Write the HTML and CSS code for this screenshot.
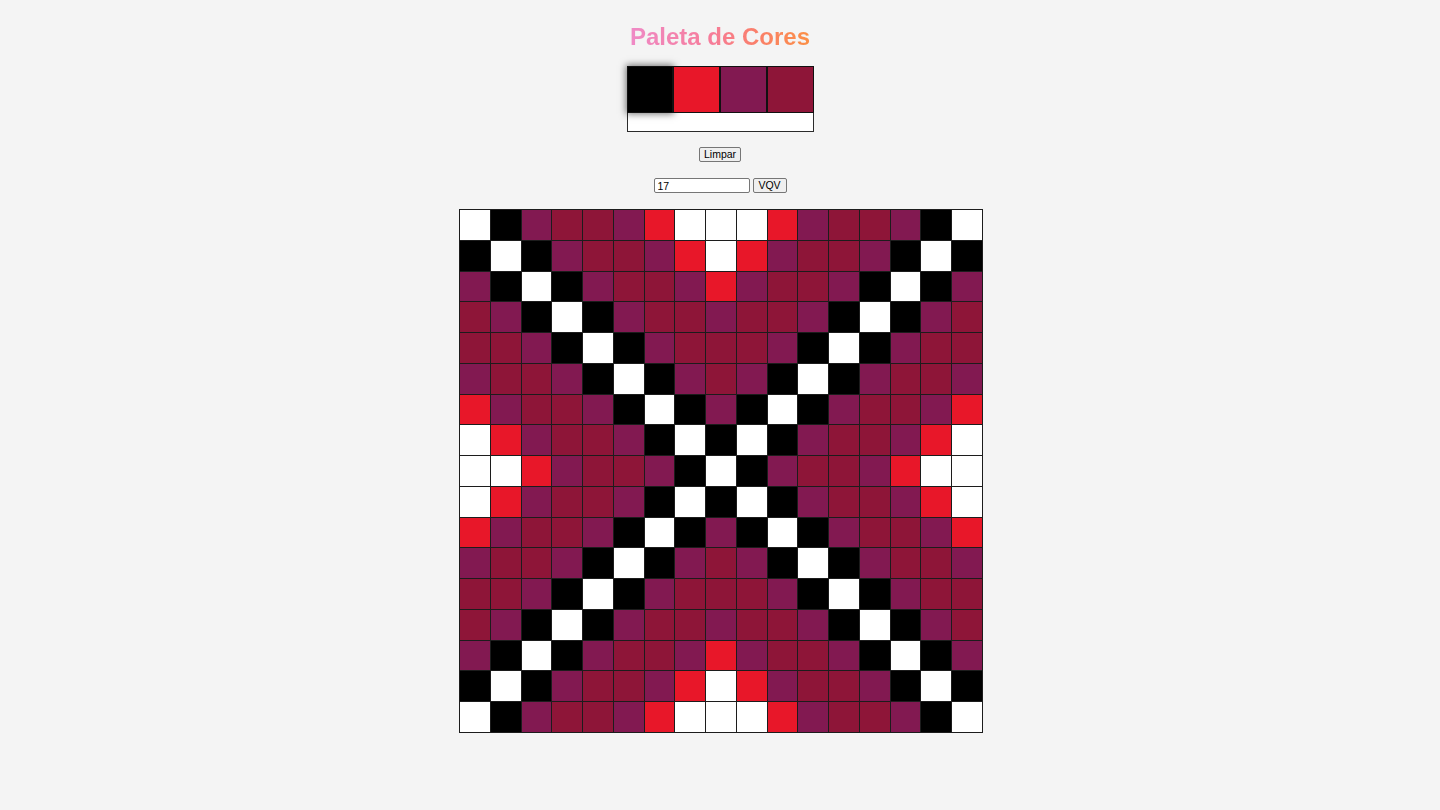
FILE: index.html
```html
<!DOCTYPE html>
<html lang="pt-BR">
<head>
<meta charset="utf-8">
<title>Paleta de Cores</title>
<link rel="stylesheet" href="styles.css">
</head>
<body>
<main class="app">
  <h1 class="title">Paleta de Cores</h1>
  <section class="palette">
    <div class="swatches">
      <div class="swatch k selected"></div>
      <div class="swatch r"></div>
      <div class="swatch p"></div>
      <div class="swatch m"></div>
    </div>
  </section>
  <button class="btn clear">Limpar</button>
  <div class="size-row">
    <input class="size-input" type="text" value="17">
    <button class="btn vqv">VQV</button>
  </div>
  <section class="board">
    <div class="c w"></div><div class="c k"></div><div class="c p"></div><div class="c m"></div><div class="c m"></div><div class="c p"></div><div class="c r"></div><div class="c w"></div><div class="c w"></div><div class="c w"></div><div class="c r"></div><div class="c p"></div><div class="c m"></div><div class="c m"></div><div class="c p"></div><div class="c k"></div><div class="c w"></div>
    <div class="c k"></div><div class="c w"></div><div class="c k"></div><div class="c p"></div><div class="c m"></div><div class="c m"></div><div class="c p"></div><div class="c r"></div><div class="c w"></div><div class="c r"></div><div class="c p"></div><div class="c m"></div><div class="c m"></div><div class="c p"></div><div class="c k"></div><div class="c w"></div><div class="c k"></div>
    <div class="c p"></div><div class="c k"></div><div class="c w"></div><div class="c k"></div><div class="c p"></div><div class="c m"></div><div class="c m"></div><div class="c p"></div><div class="c r"></div><div class="c p"></div><div class="c m"></div><div class="c m"></div><div class="c p"></div><div class="c k"></div><div class="c w"></div><div class="c k"></div><div class="c p"></div>
    <div class="c m"></div><div class="c p"></div><div class="c k"></div><div class="c w"></div><div class="c k"></div><div class="c p"></div><div class="c m"></div><div class="c m"></div><div class="c p"></div><div class="c m"></div><div class="c m"></div><div class="c p"></div><div class="c k"></div><div class="c w"></div><div class="c k"></div><div class="c p"></div><div class="c m"></div>
    <div class="c m"></div><div class="c m"></div><div class="c p"></div><div class="c k"></div><div class="c w"></div><div class="c k"></div><div class="c p"></div><div class="c m"></div><div class="c m"></div><div class="c m"></div><div class="c p"></div><div class="c k"></div><div class="c w"></div><div class="c k"></div><div class="c p"></div><div class="c m"></div><div class="c m"></div>
    <div class="c p"></div><div class="c m"></div><div class="c m"></div><div class="c p"></div><div class="c k"></div><div class="c w"></div><div class="c k"></div><div class="c p"></div><div class="c m"></div><div class="c p"></div><div class="c k"></div><div class="c w"></div><div class="c k"></div><div class="c p"></div><div class="c m"></div><div class="c m"></div><div class="c p"></div>
    <div class="c r"></div><div class="c p"></div><div class="c m"></div><div class="c m"></div><div class="c p"></div><div class="c k"></div><div class="c w"></div><div class="c k"></div><div class="c p"></div><div class="c k"></div><div class="c w"></div><div class="c k"></div><div class="c p"></div><div class="c m"></div><div class="c m"></div><div class="c p"></div><div class="c r"></div>
    <div class="c w"></div><div class="c r"></div><div class="c p"></div><div class="c m"></div><div class="c m"></div><div class="c p"></div><div class="c k"></div><div class="c w"></div><div class="c k"></div><div class="c w"></div><div class="c k"></div><div class="c p"></div><div class="c m"></div><div class="c m"></div><div class="c p"></div><div class="c r"></div><div class="c w"></div>
    <div class="c w"></div><div class="c w"></div><div class="c r"></div><div class="c p"></div><div class="c m"></div><div class="c m"></div><div class="c p"></div><div class="c k"></div><div class="c w"></div><div class="c k"></div><div class="c p"></div><div class="c m"></div><div class="c m"></div><div class="c p"></div><div class="c r"></div><div class="c w"></div><div class="c w"></div>
    <div class="c w"></div><div class="c r"></div><div class="c p"></div><div class="c m"></div><div class="c m"></div><div class="c p"></div><div class="c k"></div><div class="c w"></div><div class="c k"></div><div class="c w"></div><div class="c k"></div><div class="c p"></div><div class="c m"></div><div class="c m"></div><div class="c p"></div><div class="c r"></div><div class="c w"></div>
    <div class="c r"></div><div class="c p"></div><div class="c m"></div><div class="c m"></div><div class="c p"></div><div class="c k"></div><div class="c w"></div><div class="c k"></div><div class="c p"></div><div class="c k"></div><div class="c w"></div><div class="c k"></div><div class="c p"></div><div class="c m"></div><div class="c m"></div><div class="c p"></div><div class="c r"></div>
    <div class="c p"></div><div class="c m"></div><div class="c m"></div><div class="c p"></div><div class="c k"></div><div class="c w"></div><div class="c k"></div><div class="c p"></div><div class="c m"></div><div class="c p"></div><div class="c k"></div><div class="c w"></div><div class="c k"></div><div class="c p"></div><div class="c m"></div><div class="c m"></div><div class="c p"></div>
    <div class="c m"></div><div class="c m"></div><div class="c p"></div><div class="c k"></div><div class="c w"></div><div class="c k"></div><div class="c p"></div><div class="c m"></div><div class="c m"></div><div class="c m"></div><div class="c p"></div><div class="c k"></div><div class="c w"></div><div class="c k"></div><div class="c p"></div><div class="c m"></div><div class="c m"></div>
    <div class="c m"></div><div class="c p"></div><div class="c k"></div><div class="c w"></div><div class="c k"></div><div class="c p"></div><div class="c m"></div><div class="c m"></div><div class="c p"></div><div class="c m"></div><div class="c m"></div><div class="c p"></div><div class="c k"></div><div class="c w"></div><div class="c k"></div><div class="c p"></div><div class="c m"></div>
    <div class="c p"></div><div class="c k"></div><div class="c w"></div><div class="c k"></div><div class="c p"></div><div class="c m"></div><div class="c m"></div><div class="c p"></div><div class="c r"></div><div class="c p"></div><div class="c m"></div><div class="c m"></div><div class="c p"></div><div class="c k"></div><div class="c w"></div><div class="c k"></div><div class="c p"></div>
    <div class="c k"></div><div class="c w"></div><div class="c k"></div><div class="c p"></div><div class="c m"></div><div class="c m"></div><div class="c p"></div><div class="c r"></div><div class="c w"></div><div class="c r"></div><div class="c p"></div><div class="c m"></div><div class="c m"></div><div class="c p"></div><div class="c k"></div><div class="c w"></div><div class="c k"></div>
    <div class="c w"></div><div class="c k"></div><div class="c p"></div><div class="c m"></div><div class="c m"></div><div class="c p"></div><div class="c r"></div><div class="c w"></div><div class="c w"></div><div class="c w"></div><div class="c r"></div><div class="c p"></div><div class="c m"></div><div class="c m"></div><div class="c p"></div><div class="c k"></div><div class="c w"></div>
  </section>
</main>
</body>
</html>
```

FILE: styles.css
```css
* { box-sizing: border-box; }

html, body {
  margin: 0;
  background: #f4f4f4;
  font-family: "Liberation Sans", Arial, sans-serif;
}

.app {
  display: flex;
  flex-direction: column;
  align-items: center;
  padding-top: 23px;
  padding-bottom: 40px;
}

.title {
  margin: 0 0 16px;
  height: 27px;
  font-size: 24px;
  line-height: 27px;
  font-weight: bold;
  background: linear-gradient(to right, #ef8ac6 0%, #f67c9a 45%, #fa7f6a 70%, #fb8f45 100%);
  -webkit-background-clip: text;
  background-clip: text;
  color: transparent;
}

.palette {
  width: 187px;
  height: 66px;
  border: 1px solid #2b2b2b;
  background: #fff;
}

.swatches {
  display: flex;
}

.swatch {
  flex: 1;
  height: 47px;
  margin-top: -1px;
  border: 1px solid #111;
}

.swatch:first-child { margin-left: -1px; }
.swatch:last-child { margin-right: -1px; }

.swatch.selected {
  box-shadow: 0 0 7px 1px rgba(0, 0, 0, 0.55);
}

.k { background: #000; }
.r { background: #e81729; }
.p { background: #821951; }
.m { background: #8e1538; }
.w { background: #fff; }

.btn {
  height: 15px;
  padding: 0 4px;
  font-family: "Liberation Sans", Arial, sans-serif;
  font-size: 10.5px;
  line-height: 13px;
  color: #000;
  background: #efefef;
  border: 1px solid #767676;
  border-radius: 2px;
}

.clear {
  margin-top: 15px;
  width: 42px;
}

.size-row {
  margin-top: 16px;
  display: flex;
  gap: 3px;
}

.size-input {
  width: 96px;
  height: 15px;
  padding: 0 3px;
  font-family: "Liberation Sans", Arial, sans-serif;
  font-size: 10.5px;
  line-height: 13px;
  color: #000;
  background: #fff;
  border: 1px solid #767676;
  border-radius: 2px;
}

.vqv { width: 34px; }

.board {
  margin-top: 16px;
  margin-left: 2px;
  width: 524px;
  height: 524px;
  display: grid;
  grid-template-columns: repeat(17, 1fr);
  grid-template-rows: repeat(17, 1fr);
  gap: 1px;
  padding: 1px;
  background: #1c1c1c;
}

.c { min-width: 0; min-height: 0; }
```
